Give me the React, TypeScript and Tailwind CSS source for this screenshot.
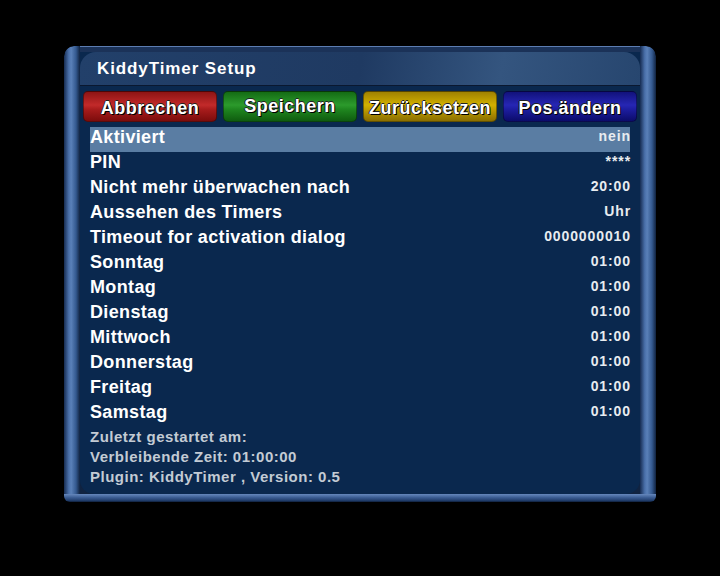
const buttons = [
  { label: "Abbrechen", cls: "bg-[linear-gradient(180deg,#8e1414_0%,#c22a2a_45%,#a81c1c_60%,#7c0c0c_100%)]", up: false },
  { label: "Speichern", cls: "bg-[linear-gradient(180deg,#146c14_0%,#2c9a2c_45%,#1f861f_60%,#0f5c0f_100%)]", up: true },
  { label: "Zurücksetzen", cls: "bg-[linear-gradient(180deg,#a08200_0%,#d2b000_45%,#bf9e00_60%,#8a6e00_100%)]", up: false },
  { label: "Pos.ändern", cls: "bg-[linear-gradient(180deg,#12127c_0%,#2626b4_45%,#1d1da0_60%,#0c0c6a_100%)]", up: false },
]

const rows = [
  { label: "Aktiviert", value: "nein" },
  { label: "PIN", value: "****" },
  { label: "Nicht mehr überwachen nach", value: "20:00" },
  { label: "Aussehen des Timers", value: "Uhr" },
  { label: "Timeout for activation dialog", value: "0000000010" },
  { label: "Sonntag", value: "01:00" },
  { label: "Montag", value: "01:00" },
  { label: "Dienstag", value: "01:00" },
  { label: "Mittwoch", value: "01:00" },
  { label: "Donnerstag", value: "01:00" },
  { label: "Freitag", value: "01:00" },
  { label: "Samstag", value: "01:00" },
]

const info = ["Zuletzt gestartet am:", "Verbleibende Zeit: 01:00:00", "Plugin: KiddyTimer , Version: 0.5"]

const pillar =
  "w-[16px] bg-[linear-gradient(90deg,#162c52_0%,#4a70aa_30%,#5a80b8_45%,#34598f_75%,#10223f_100%)]"

export default function App() {
  return (
    <div
      className="w-[720px] h-[576px] bg-black pt-[46px] pl-[64px]"
      style={{ fontFamily: '"Liberation Sans", Arial, sans-serif' }}
    >
      <div className="w-[592px] h-[456px] flex flex-col rounded-t-[10px] overflow-hidden">
        <div className="flex flex-1">
          <div className={`${pillar} rounded-tl-[10px]`} />

          {/* centre: top strip + panel */}
          <div className="flex-1 flex flex-col bg-[#102341]">
            <div className="h-[6px] border-t border-[#5c7db2] bg-[#1b3258]" />
            <div className="flex-1 flex flex-col rounded-b-[14px] bg-[#0a284e] overflow-hidden">
              <div className="h-[34px] shrink-0 rounded-t-[16px] border-b border-[#0a1830] bg-[linear-gradient(100deg,#22406a_0%,#1f3a62_50%,#34557f_75%,#27466f_100%)] pl-[17px] flex items-center">
                <span className="text-[17px] font-bold text-white leading-none tracking-[0.9px]">KiddyTimer Setup</span>
              </div>

              <div className="flex gap-[6px] pl-[3px] pt-[5px]">
                {buttons.map((b) => (
                  <div
                    key={b.label}
                    className={`w-[134px] h-[31px] rounded-[5px] border border-black/40 flex justify-center ${b.up ? "items-start pt-[4px]" : "items-start pt-[6px]"} ${b.cls}`}
                  >
                    <span className="text-[18px] font-bold text-white leading-[20px] tracking-[0.5px] [text-shadow:1px_1px_0_#000,-1px_0_0_#222,0_-1px_0_#222]">
                      {b.label}
                    </span>
                  </div>
                ))}
              </div>

              <div className="flex flex-col px-[10px] mt-[5px]">
                {rows.map((r, i) => (
                  <div
                    key={r.label}
                    className={`h-[25px] flex justify-between items-start ${i === 0 ? "bg-[#5a7da3]" : ""}`}
                  >
                    <span className="text-[18px] font-bold text-white leading-[20px] tracking-[0.35px]">{r.label}</span>
                    <span className="text-[14px] font-bold text-[#e8ecf0] leading-[19px] tracking-[0.9px] -mr-[1px]">
                      {r.value}
                    </span>
                  </div>
                ))}
              </div>

              <div className="flex flex-col px-[10px] mt-[0px]">
                {info.map((t) => (
                  <div key={t} className="h-[20px] text-[15px] font-bold text-[#c3cbd4] leading-[20px] tracking-[0.5px]">
                    {t}
                  </div>
                ))}
              </div>
            </div>
          </div>

          <div className={`${pillar} rounded-tr-[10px]`} />
        </div>
        <div className="h-[8px] rounded-b-[6px] bg-[linear-gradient(180deg,#6688bd_0%,#3a5c92_45%,#223f6e_80%,#0f1f3a_100%)]" />
      </div>
    </div>
  )
}
